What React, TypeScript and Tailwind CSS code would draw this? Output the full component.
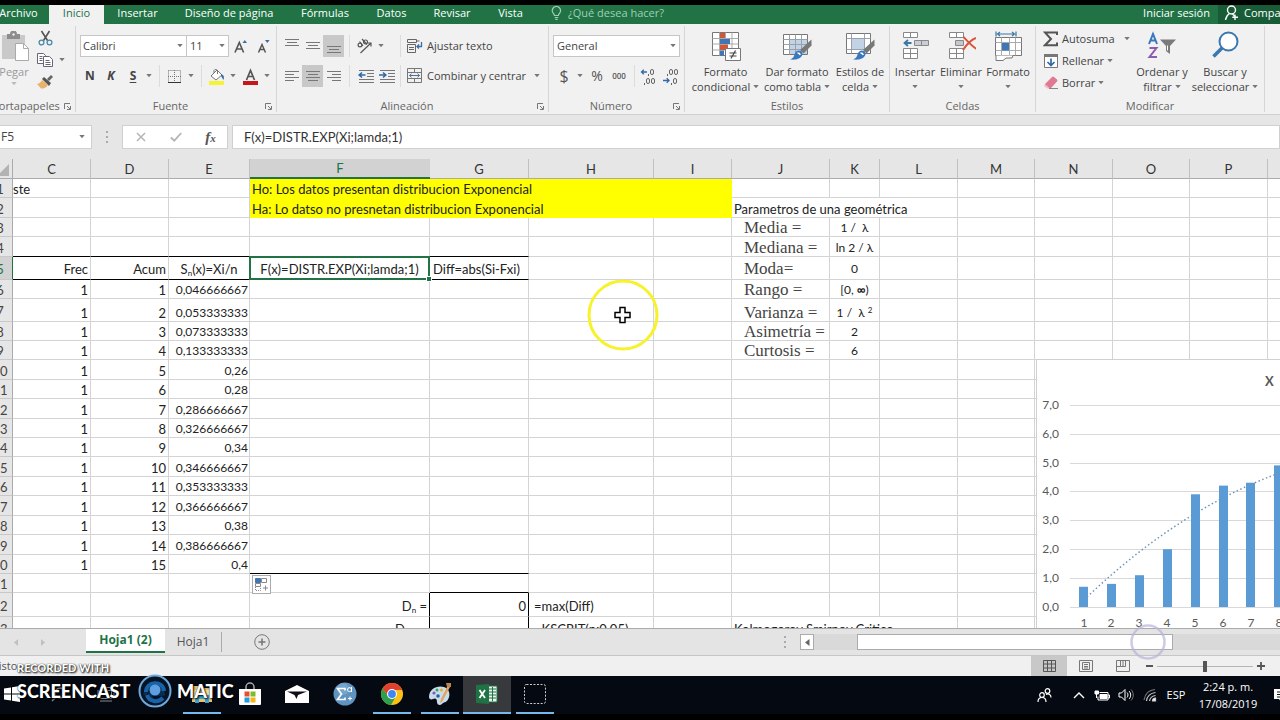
import React from "react";

type Kids = { children?: React.ReactNode };

const UI = "font-['Open_Sans','Noto_Sans',sans-serif]";
const CELL = "font-['Lato','Open_Sans',sans-serif]";

/* ---------- small shared pieces ---------- */

function Caret({ color = "#777" }: { color?: string }) {
  return (
    <svg width="6" height="4" viewBox="0 0 6 4" className="shrink-0" aria-hidden="true">
      <path d="M.3 0h5.400L3 3.300z" fill={color} />
    </svg>
  );
}

function IconBtn({ label, className = "w-[21px]", children }: Kids & { label: string; className?: string }) {
  return (
    <button aria-label={label} className={`flex h-[22px] shrink-0 items-center justify-center ${className}`}>
      {children}
    </button>
  );
}

function Sep({ className }: { className: string }) {
  return <span className={`h-[22px] w-px shrink-0 bg-[#dcdcdc] ${className}`} />;
}

function Group({ name, launcher, className, children }: Kids & { name: string; launcher?: boolean; className: string }) {
  return (
    <section aria-label={name} className={`flex shrink-0 flex-col border-r border-[#d6d6d6] ${className}`}>
      <div className="flex-1">{children}</div>
      <div className="flex h-3 items-center text-[#666]">
        <span className="flex-1 text-center leading-3 whitespace-nowrap">{name}</span>
        {launcher && (
          <button aria-label={`Configuración de ${name}`} className="flex w-[11px] shrink-0">
            <svg width="7" height="7" viewBox="0 0 7 7" fill="none" stroke="#777">
              <path d="M.5 6V.5H6M3 3l3 3M6.500 3v3.500H3" />
            </svg>
          </button>
        )}
      </div>
    </section>
  );
}

function BigBtn({ icon, lines, className, caretBelow }: { icon: React.ReactNode; lines: string[]; className: string; caretBelow?: boolean }) {
  return (
    <button className={`flex shrink-0 flex-col items-center gap-[3px] leading-[15px] whitespace-nowrap text-[#444] ${className}`}>
      <span className="flex h-[30px] items-center justify-center">{icon}</span>
      <span>
        <span className="block">{lines[0]}</span>
        <span className="flex h-[15px] items-center justify-center gap-[3px]">
          {!caretBelow && lines[1]}
          <Caret />
        </span>
      </span>
    </button>
  );
}

function Lines({ rows, y }: { rows: [number, number][]; y: number }) {
  return (
    <svg width="14" height="16" viewBox="0 0 14 16" stroke="#777" aria-hidden="true">
      {rows.map(([a, b], i) => (
        <path key={i} d={`M${a} ${y + i * 3 + 0.5}H${b}`} />
      ))}
    </svg>
  );
}

/* ---------- title tabs ---------- */

const TABS: [string, string][] = [
  ["Insertar", "w-[67px]"],
  ["Diseño de página", "w-[116px]"],
  ["Fórmulas", "w-[76px]"],
  ["Datos", "w-[57px]"],
  ["Revisar", "w-[64px]"],
  ["Vista", "w-[53px]"],
];

function TabStrip() {
  return (
    <nav className="flex h-[19px] shrink-0 items-start bg-[#217346] leading-4 whitespace-nowrap text-white">
      <button className="w-[61px] shrink-0">Archivo</button>
      <button className="h-[19px] w-[55px] shrink-0 bg-[#f1f1f1] pb-[3px] text-[#217346]">Inicio</button>
      {TABS.map(([t, w]) => (
        <button key={t} className={`shrink-0 ${w}`}>
          {t}
        </button>
      ))}
      <button className="ml-[14px] flex items-center gap-[6px] text-[#9fcfb3]">
        <svg width="11" height="14" viewBox="0 0 11 14" fill="none" stroke="#9fcfb3" strokeWidth="1.2">
          <path d="M3.500 9.500C3.500 8 1.200 7 1.200 4.700a4.200 4.200 0 0 1 8.400 0C9.600 7 7.300 8 7.300 9.500zM3.700 11.500h3.500M4.300 13.300h2.300" />
        </svg>
        ¿Qué desea hacer?
      </button>
      <button className="mr-2 ml-auto">Iniciar sesión</button>
      <button className="flex h-[19px] w-[62px] shrink-0 items-start gap-[5px] overflow-hidden bg-[#185c37] pl-[6px]">
        <svg width="15" height="16" viewBox="0 0 15 16" fill="none" stroke="#fff" strokeWidth="1.4" className="shrink-0">
          <circle cx="7.500" cy="5" r="4" />
          <path d="M5.500 8.500C3 10 2 12 1.500 15M8.500 9l2 2M11 9.500v5.500M8.300 12.300h5.700" />
        </svg>
        Compartir
      </button>
    </nav>
  );
}

/* ---------- ribbon ---------- */

function GridIcon({ kind }: { kind: "cond" | "table" | "style" }) {
  if (kind === "cond")
    return (
      <svg width="30" height="30" viewBox="0 0 30 30">
        <path d="M1.500 1.500h26v23h-26z" fill="#fff" stroke="#777" />
        <path d="M1.500 7.500h26M1.500 13h26M1.500 19h26M8.500 1.500v23M14.500 1.500v23M21 1.500v23" stroke="#aaa" fill="none" />
        <path d="M9 2h5v5H9zM9 13.500h8V19H9z" fill="#d0583a" />
        <path d="M9 8h10v5H9zM9 19.500h4v5H9z" fill="#3f76b5" />
        <path d="M14.500 17.500h15v12h-15z" fill="#fff" stroke="#777" />
        <path d="M18.500 22h7M18.500 25h7M24.500 19.500l-4.500 8" stroke="#444" fill="none" strokeWidth="1.200" />
      </svg>
    );
  return (
    <svg width="30" height="30" viewBox="0 0 30 30">
      <path d={kind === "table" ? "M1.500 3.500h24v20h-24z" : "M1.500 2.500h24v20h-24z"} fill="#fff" stroke="#777" />
      {kind === "table" ? (
        <>
          <path d="M8 9h17v14H8z" fill="#c3d3e6" />
          <path d="M1.500 8.500h24M1.500 13.500h24M1.500 18.500h24M7.500 3.500v20M13.500 3.500v20M19.500 3.500v20" stroke="#9ba1aa" fill="none" />
        </>
      ) : (
        <>
          <path d="M1.500 7.500h24M1.500 18.500h24M6.500 2.500v20M19.500 2.500v20" stroke="#9ba1aa" fill="none" />
          <path d="M7 8h12v10H7z" fill="#c3d3e6" />
        </>
      )}
      <path d="M29.500 8.500v6l-8 8-3.500-3.500z" fill="#777" />
      <path d="M17 19.500c2.500.5 3.500 2 3.500 4-2 5-7 5.500-12.500 5 3-1 4-3 4.500-5 .8-2.500 2.500-4 4.500-4z" fill="#3a78bd" />
      <path d="M15.500 22c1.500 0 2.500.8 2.800 2" stroke="#fff" fill="none" strokeWidth="1.300" />
    </svg>
  );
}

function CellsIcon({ kind }: { kind: "ins" | "del" }) {
  return (
    <svg width="30" height="30" viewBox="0 0 30 30" fill="none">
      <path d="M3.500 1.500h14v5h-14zM10.500 1.500v5M3.500 17.500h14v10h-14zM3.500 22.500h14M10.500 17.500v10" fill="#fff" stroke="#888" />
      {kind === "ins" ? (
        <>
          <path d="M14.500 9.500h14v5h-14zM21.500 9.500v5" fill="#c9ced6" stroke="#888" />
          <path d="M11.500 12H5M8 9l-3.500 3L8 15" stroke="#3a78a8" strokeWidth="1.800" />
        </>
      ) : (
        <>
          <path d="M9.500 9.500h8v5h-8z" fill="#c3c8cf" stroke="#888" />
          <path d="M17.500 6c3 3 8 9 13 12M30 7c-5 2-9 6-13 12" stroke="#d8553a" strokeWidth="2" />
        </>
      )}
    </svg>
  );
}

function DecimalIcon({ more }: { more?: boolean }) {
  return (
    <svg width="18" height="17" viewBox="0 0 18 17" fill="none" stroke="#666">
      <rect x={more ? 11.5 : 12.500} y={more ? 1.5 : 10.500} width="3" height="5" rx="1.500" />
      <rect x={more ? 7.5 : 8.500} y={more ? 10.500 : 1.500} width="3" height="5" rx="1.500" />
      <rect x={more ? 12.500 : 13.500} y={more ? 10.500 : 1.500} width="3" height="5" rx="1.500" />
      <path d={more ? "M9.500 6v2M5.500 15v2" : "M6.500 6v2M10.500 15v2"} />
      <path d={more ? "M8 4H2.500M4.800 1.800L2.500 4l2.300 2.200" : "M2 12.500h6M5.700 10.300L8 12.500l-2.300 2.200"} stroke="#2f6aa8" strokeWidth="1.300" />
    </svg>
  );
}

function Ribbon() {
  return (
    <div className="flex h-[90px] shrink-0 overflow-hidden bg-[#f1f1f1] py-0.5">
      <Group name="Portapapeles" launcher className="w-[88px]">
        <div className="flex pl-2">
          <button className="flex w-9 flex-col items-center gap-[3px] pt-[5px] leading-[15px] text-[#999]">
            <svg width="30" height="30" viewBox="0 0 30 30">
              <path d="M3 4h23v24H3z" fill="#c9c9c9" />
              <path d="M8 3h3a3.500 3.500 0 0 1 7 0h3v5H8z" fill="#8d8d8d" />
              <circle cx="14.500" cy="3.500" r="1.200" fill="#eee" />
              <path d="M16.500 12.500h8l5 5v12h-13z" fill="#fff" stroke="#aaa" />
              <path d="M24.500 12.500v5h5" fill="none" stroke="#aaa" />
            </svg>
            <span>Pegar</span>
            <Caret color="#bbb" />
          </button>
          <div className="flex w-[38px] flex-col pt-px">
            <IconBtn label="Cortar" className="w-[26px]">
              <svg width="15" height="16" viewBox="0 0 15 16" fill="none">
                <path d="M3.500 1l6 9.500M11.500 1l-6 9.500" stroke="#555" strokeWidth="1.600" />
                <circle cx="3.500" cy="12.500" r="2.400" stroke="#4789a8" strokeWidth="1.300" />
                <circle cx="11.500" cy="12.500" r="2.400" stroke="#4789a8" strokeWidth="1.300" />
              </svg>
            </IconBtn>
            <IconBtn label="Copiar" className="w-[38px] gap-[6px]">
              <svg width="16" height="14" viewBox="0 0 16 14" fill="#fff" stroke="#667">
                <path d="M.5.500h6l2 2v8h-8zM2.500 3.500h3M2.500 5.500h3M2.500 7.500h3" />
                <path d="M6.500 3.500h6l3 3v7h-9zM8.500 7.500h4M8.500 9.500h5M8.500 11.500h5" />
              </svg>
              <Caret />
            </IconBtn>
            <IconBtn label="Copiar formato" className="w-[26px]">
              <svg width="16" height="14" viewBox="0 0 16 14">
                <path d="M10 4l4-4 2 2-4 4z" fill="#666" />
                <path d="M5 4l2-2 7 6-2 3z" fill="#555" />
                <path d="M5 5l6 5c-2 3-5 4-7 3.500L0 9c2-.5 4-1.500 5-4z" fill="#e8b36d" />
              </svg>
            </IconBtn>
          </div>
        </div>
      </Group>

      <Group name="Fuente" launcher className="w-[201px]">
        <div className="flex flex-col gap-2 pt-[9px] pl-1">
          <div className="flex items-center">
            <label className="relative flex items-center">
              <select aria-label="Fuente" className="h-[22px] w-[107px] appearance-none border border-[#c6c6c6] bg-white pl-[2px] text-[#444]">
                <option>Calibri</option>
              </select>
              <span className="pointer-events-none absolute right-1"><Caret /></span>
            </label>
            <label className="relative flex items-center">
              <select aria-label="Tamaño de fuente" className="h-[22px] w-[42px] appearance-none border border-l-0 border-[#c6c6c6] bg-white pl-[3px] text-[#444]">
                <option>11</option>
              </select>
              <span className="pointer-events-none absolute right-1"><Caret /></span>
            </label>
            <IconBtn label="Aumentar tamaño" className="w-6">
              <svg width="14" height="15" viewBox="0 0 14 15" fill="none">
                <path d="M1 13.500L5.300 3.500 9.600 13.500M2.500 10h5.600" stroke="#555" strokeWidth="1.600" />
                <path d="M8.500 4l2.300-3L13 4z" fill="#3a6ea5" />
              </svg>
            </IconBtn>
            <IconBtn label="Disminuir tamaño" className="w-[22px]">
              <svg width="14" height="15" viewBox="0 0 14 15" fill="none">
                <path d="M1.500 13.500l3.500-8 3.500 8M3 10.500h4.200" stroke="#555" strokeWidth="1.500" />
                <path d="M8 1h4.600l-2.300 3z" fill="#3a6ea5" />
              </svg>
            </IconBtn>
          </div>
          <div className="flex items-center text-xs text-[#444]">
            <IconBtn label="Negrita" className="w-5"><b>N</b></IconBtn>
            <IconBtn label="Cursiva" className="w-[22px]"><b className="italic">K</b></IconBtn>
            <IconBtn label="Subrayado" className="w-[22px]"><b className="underline underline-offset-2">S</b></IconBtn>
            <IconBtn label="Opciones de subrayado" className="w-[10px]"><Caret /></IconBtn>
            <Sep className="mr-1 ml-[5px]" />
            <IconBtn label="Bordes" className="w-5">
              <svg width="13" height="13" viewBox="0 0 13 13" fill="none" stroke="#777">
                <path d="M.5.500h12v12M.5.500v12M6.500 0v12M0 6.500h13" strokeDasharray="1 1" />
                <path d="M0 12.500h13" stroke="#333" />
              </svg>
            </IconBtn>
            <IconBtn label="Opciones de bordes" className="w-[14px]"><Caret /></IconBtn>
            <Sep className="mr-1 ml-[3px]" />
            <IconBtn label="Color de relleno" className="w-[22px]">
              <svg width="16" height="17" viewBox="0 0 16 17">
                <path d="M2 8l6-6 5 5-6 5z" fill="#fff" stroke="#777" />
                <path d="M5 5V2.500a2 2 0 0 1 3.500 0V6" fill="none" stroke="#777" />
                <path d="M12 6c3 1 3.500 3 2.500 6-1-1-1.500-3-2.500-4z" fill="#3a6ea5" />
                <path d="M0 13h15v4H0z" fill="#f4f432" />
              </svg>
            </IconBtn>
            <IconBtn label="Opciones de relleno" className="w-[10px]"><Caret /></IconBtn>
            <IconBtn label="Color de fuente" className="w-6">
              <svg width="15" height="17" viewBox="0 0 15 17" fill="none">
                <path d="M3.500 12L7.500 2.500l4 9.500M5 8.500h5" stroke="#555" strokeWidth="1.700" />
                <path d="M0 13h15v4H0z" fill="#c8161d" />
              </svg>
            </IconBtn>
            <IconBtn label="Opciones de color" className="w-[10px]"><Caret /></IconBtn>
          </div>
        </div>
      </Group>

      <Group name="Alineación" launcher className="w-[272px]">
        <div className="flex flex-col gap-2 pt-[9px] pl-1">
          <div className="flex items-center">
            <IconBtn label="Alinear arriba"><Lines y={1} rows={[[0, 14], [2, 12], [0, 14]]} /></IconBtn>
            <IconBtn label="Alinear al medio"><Lines y={4} rows={[[0, 14], [2, 12], [0, 14]]} /></IconBtn>
            <IconBtn label="Alinear abajo" className="w-[21px] bg-[#c8c8c8]"><Lines y={8} rows={[[0, 14], [2, 12], [0, 14]]} /></IconBtn>
            <Sep className="mx-[5px]" />
            <IconBtn label="Orientación" className="w-[30px] gap-1">
              <svg width="18" height="16" viewBox="0 0 18 16" fill="none" stroke="#555" strokeWidth="1.200">
                <circle cx="4" cy="7" r="1.900" />
                <path d="M3.500 3.500l3.500 4.500M6 1l5 5.500" />
                <circle cx="9.500" cy="4" r="2" />
                <path d="M4.500 15L15 5M11.500 5H15v3.500" />
              </svg>
              <Caret />
            </IconBtn>
            <Sep className="mr-[5px] ml-[15px]" />
            <button className="flex h-[22px] items-center gap-[4px] whitespace-nowrap text-[#444]">
              <svg width="17" height="16" viewBox="0 0 17 16" fill="none" stroke="#666">
                <path d="M1.500 1.500h9v3h-9zM1.500 6.500h8v8h-8zM3 9.500h5M3 11.500h5M10.500 3h3" />
                <path d="M15.500 4v4.500H11M13 6.500l-2 2 2 2" stroke="#3a6ea5" strokeWidth="1.300" />
              </svg>
              Ajustar texto
            </button>
          </div>
          <div className="flex items-center">
            <IconBtn label="Alinear a la izquierda"><Lines y={3} rows={[[0, 14], [0, 9], [0, 14], [0, 9]]} /></IconBtn>
            <IconBtn label="Centrar" className="w-[21px] bg-[#c8c8c8]"><Lines y={3} rows={[[0, 14], [2, 12], [0, 14], [2, 12]]} /></IconBtn>
            <IconBtn label="Alinear a la derecha"><Lines y={3} rows={[[0, 14], [5, 14], [0, 14], [5, 14]]} /></IconBtn>
            <Sep className="mx-[5px]" />
            <IconBtn label="Disminuir sangría">
              <svg width="16" height="14" viewBox="0 0 16 14" fill="none" stroke="#777">
                <path d="M1 1.500h15M9 4.500h7M9 7.500h7M1 10.500h15M1 13.500h15" />
                <path d="M7.500 6H1M4 3.500L1.200 6 4 8.500" stroke="#2f6aa8" strokeWidth="1.600" />
              </svg>
            </IconBtn>
            <IconBtn label="Aumentar sangría">
              <svg width="16" height="14" viewBox="0 0 16 14" fill="none" stroke="#777">
                <path d="M1 1.500h15M9 4.500h7M9 7.500h7M1 10.500h15M1 13.500h15" />
                <path d="M0 6h7M4 3.500L6.800 6 4 8.500" stroke="#2f6aa8" strokeWidth="1.600" />
              </svg>
            </IconBtn>
            <Sep className="mr-[5px] ml-[3px]" />
            <button className="flex h-[22px] items-center gap-[4px] whitespace-nowrap text-[#444]">
              <svg width="17" height="16" viewBox="0 0 17 16" fill="none" stroke="#777">
                <path d="M1.500.500h14v14h-14zM1.500 4.500h14M1.500 10.500h14M8.500.500v4M8.500 10.500v4" />
                <path d="M3.500 7.500h10M5.500 5.700l-2 1.800 2 1.800M11.500 5.700l2 1.800-2 1.800" stroke="#4a7396" />
              </svg>
              Combinar y centrar
            </button>
            <IconBtn label="Opciones de combinar" className="w-[22px]"><Caret /></IconBtn>
          </div>
        </div>
      </Group>

      <Group name="Número" launcher className="w-[136px]">
        <div className="flex flex-col gap-2 px-1 pt-[9px]">
          <label className="relative flex items-center">
            <select aria-label="Formato de número" className="h-[22px] w-full appearance-none border border-[#c6c6c6] bg-white pl-[3px] text-[#444]">
              <option>General</option>
            </select>
            <span className="pointer-events-none absolute right-1"><Caret /></span>
          </label>
          <div className="flex items-center text-[#555]">
            <IconBtn label="Moneda" className="w-[22px] text-base">$</IconBtn>
            <IconBtn label="Opciones de moneda" className="w-[10px]"><Caret /></IconBtn>
            <IconBtn label="Porcentaje" className="w-6 text-sm">%</IconBtn>
            <IconBtn label="Millares" className="w-5 text-[8px] font-semibold">000</IconBtn>
            <Sep className="mr-[2px] ml-[5px]" />
            <IconBtn label="Aumentar decimales" className="w-[22px]"><DecimalIcon more /></IconBtn>
            <IconBtn label="Disminuir decimales" className="w-[22px]"><DecimalIcon /></IconBtn>
          </div>
        </div>
      </Group>

      <Group name="Estilos" className="w-[205px]">
        <div className="flex pt-[5px] pl-1">
          <BigBtn className="w-[73px]" icon={<GridIcon kind="cond" />} lines={["Formato", "condicional"]} />
          <BigBtn className="w-[70px]" icon={<GridIcon kind="table" />} lines={["Dar formato", "como tabla"]} />
          <BigBtn className="w-[56px]" icon={<GridIcon kind="style" />} lines={["Estilos de", "celda"]} />
        </div>
      </Group>

      <Group name="Celdas" className="w-[146px]">
        <div className="flex pt-[5px] pl-0.5">
          <BigBtn className="w-[46px]" caretBelow icon={<CellsIcon kind="ins" />} lines={["Insertar"]} />
          <BigBtn className="w-[46px]" caretBelow icon={<CellsIcon kind="del" />} lines={["Eliminar"]} />
          <BigBtn
            className="w-[48px]"
            caretBelow
            lines={["Formato"]}
            icon={
              <svg width="30" height="30" viewBox="0 0 30 30" fill="none">
                <path d="M2.500 6.500h26v18h-26z" fill="#fff" stroke="#777" />
                <path d="M2.500 11.500h26M2.500 19.500h26M8.500 6.500v18M16.500 6.500v18M22.500 6.500v18" stroke="#aaa" />
                <path d="M9 12h7v7.500H9z" fill="#3f76b5" />
                <path d="M3 24.500v5h7l3-2.500h6l1-2.500" stroke="#777" fill="#fff" />
                <path d="M3 .500v5M23 .500v5M4.500 3h17M7 1L4.500 3 7 5M19 1l2.500 2L19 5" stroke="#3a78a8" strokeWidth="1.200" />
              </svg>
            }
          />
        </div>
      </Group>

      <Group name="Modificar" className="w-[229px]">
        <div className="flex pl-1">
          <div className="flex w-[95px] flex-col pt-0.5 text-[#444]">
            <button className="flex h-[22px] items-center pl-[3px]">
              <span className="w-[19px]">
                <svg width="16" height="16" viewBox="0 0 16 16" fill="none" stroke="#555" strokeWidth="2">
                  <path d="M14 4V1.500H2L8 8l-6 6.200h12V11.500" />
                </svg>
              </span>
              <span className="w-[62px] text-left">Autosuma</span>
              <Caret />
            </button>
            <button className="flex h-[22px] items-center pl-[3px]">
              <span className="w-[19px]">
                <svg width="16" height="16" viewBox="0 0 16 16" fill="none">
                  <path d="M1.500 1.500h13v13h-13z" fill="#fff" stroke="#777" />
                  <path d="M1 1h14v3H1z" fill="#777" />
                  <path d="M8 5.500V12M4.500 9L8 12.500 11.500 9" stroke="#2f6aa8" strokeWidth="1.700" />
                </svg>
              </span>
              <span className="mr-[3px]">Rellenar</span>
              <Caret />
            </button>
            <button className="flex h-[22px] items-center pl-[3px]">
              <span className="w-[19px]">
                <svg width="16" height="14" viewBox="0 0 16 14">
                  <path d="M2 8l7-7q1-1 2 0l3 2.500q1 1 0 2L8 12H5L2 10z" fill="#e07a94" />
                  <path d="M2 8l5 4.500H4.500L1 10z" fill="#f4b9c6" />
                  <path d="M6 12.500h9" stroke="#888" />
                </svg>
              </span>
              <span className="mr-[3px]">Borrar</span>
              <Caret />
            </button>
          </div>
          <div className="flex pt-[5px]">
            <BigBtn
              className="w-[54px]"
              lines={["Ordenar y", "filtrar"]}
              icon={
                <svg width="30" height="30" viewBox="0 0 30 30" fill="none">
                  <path d="M2 13L6 3l4 10M3.500 9.500h5" stroke="#3a78bd" strokeWidth="2" />
                  <path d="M2.500 17h7L2.500 26h7.500" stroke="#8d5bb0" strokeWidth="2" />
                  <path d="M13 8.500h16l-6 6.500v8l-4-3v-5z" fill="#7a7a7a" />
                  <path d="M20.500 14.500v5" stroke="#fff" />
                </svg>
              }
            />
            <BigBtn
              className="w-[72px]"
              lines={["Buscar y", "seleccionar"]}
              icon={
                <svg width="30" height="30" viewBox="0 0 30 30" fill="none">
                  <circle cx="18.500" cy="10.500" r="9" fill="#fff" stroke="#3a78b0" strokeWidth="2" />
                  <path d="M12 17L3.500 25.500" stroke="#3a78b0" strokeWidth="3.500" />
                </svg>
              }
            />
          </div>
        </div>
      </Group>
    </div>
  );
}

/* ---------- formula bar ---------- */

function FormulaBar() {
  return (
    <div className="flex h-[45px] shrink-0 items-start border-t border-[#d0d0d0] bg-[#e6e6e6] pt-[10px]">
      <label className="flex h-6 w-[104px] shrink-0 items-center border border-[#d0d0d0] bg-white pr-[6px] pl-3">
        <input aria-label="Cuadro de nombres" defaultValue="F5" className="w-full min-w-0 text-xs text-[#444] outline-none" />
        <Caret />
      </label>
      <span className="flex h-6 w-[30px] shrink-0 flex-col items-center justify-center gap-[3px]">
        <i className="size-[2px] bg-[#aaa]" />
        <i className="size-[2px] bg-[#aaa]" />
        <i className="size-[2px] bg-[#aaa]" />
      </span>
      <div className="flex h-6 w-[106px] shrink-0 border border-[#d0d0d0] bg-white">
        <IconBtn label="Cancelar" className="w-[35px]">
          <svg width="10" height="10" viewBox="0 0 10 10" stroke="#b5b5b5" strokeWidth="1.500"><path d="M1 1l8 8M9 1L1 9" /></svg>
        </IconBtn>
        <IconBtn label="Introducir" className="w-[35px]">
          <svg width="12" height="10" viewBox="0 0 12 10" fill="none" stroke="#b5b5b5" strokeWidth="1.800"><path d="M.8 5.500l3.500 3.200L11.200 1" /></svg>
        </IconBtn>
        <IconBtn label="Insertar función" className="w-[35px]">
          <i className="font-['Liberation_Serif',serif] text-[15px] font-bold text-[#555]">f<span className="text-[11px]">x</span></i>
        </IconBtn>
      </div>
      <input
        aria-label="Barra de fórmulas"
        defaultValue="F(x)=DISTR.EXP(Xi;lamda;1)"
        className={`ml-1 h-6 min-w-0 flex-1 border border-[#d0d0d0] bg-white pl-[11px] text-[13px] text-[#333] outline-none ${CELL}`}
      />
    </div>
  );
}

/* ---------- sheet ---------- */

const COLS: [string, string][] = [
  ["C", "w-[78px]"],
  ["D", "w-[78px]"],
  ["E", "w-[81px]"],
  ["F", "w-[180px]"],
  ["G", "w-[99px]"],
  ["H", "w-[125px]"],
  ["I", "w-[78px]"],
  ["J", "w-[98px]"],
  ["K", "w-[50px]"],
  ["L", "w-[78px]"],
  ["M", "w-[77px]"],
  ["N", "w-[78px]"],
  ["O", "w-[77px]"],
  ["P", "w-[78px]"],
  ["Q", "w-[78px]"],
];

const ROW_H = [
  "h-[19px]", "h-[20px]", "h-[19px]", "h-[20px]", "h-[23px]", "h-[19px]", "h-[23px]", "h-[19px]",
  "h-[19px]", "h-[20px]", "h-[19px]", "h-[20px]", "h-[19px]", "h-[19px]", "h-[20px]", "h-[19px]",
  "h-[20px]", "h-[19px]", "h-[20px]", "h-[19px]", "h-[19px]", "h-[24px]", "h-[23px]",
];

type Cell = { v: React.ReactNode; c?: string; span?: number };
const Sub = ({ children }: Kids) => <sub className="text-[8px] leading-none">{children}</sub>;
const R = "text-right pr-0.5";
const P = "text-center text-[12px]";
const S = "pl-3 text-[17px] text-[#444] font-['Liberation_Serif',serif]";
const YEL = "bg-[#ffff00] border-[#ffff00] pl-0.5";

const SN = [
  "0,046666667", "0,053333333", "0,073333333", "0,133333333", "0,26", "0,28", "0,286666667", "0,326666667",
  "0,34", "0,346666667", "0,353333333", "0,366666667", "0,38", "0,386666667", "0,4",
];

const CELLS: Record<string, Cell> = {
  C1: { v: "ste" },
  F1: { v: "Ho: Los datos presentan distribucion Exponencial", c: YEL, span: 4 },
  F2: { v: "Ha: Lo datso no presnetan distribucion Exponencial", c: YEL, span: 4 },
  J2: { v: "Parametros de una geométrica", c: "pl-0.5", span: 3 },
  C5: { v: "Frec", c: R },
  D5: { v: "Acum", c: R },
  E5: { v: <>S<Sub>n</Sub>(x)=Xi/n</>, c: "text-center" },
  F5: { v: "F(x)=DISTR.EXP(Xi;lamda;1)", c: "text-center" },
  G5: { v: "Diff=abs(Si-Fxi)", c: "pl-[3px]" },
  J3: { v: "Media =", c: S },
  J4: { v: "Mediana =", c: S },
  J5: { v: "Moda=", c: S },
  J6: { v: "Rango =", c: S },
  J7: { v: "Varianza =", c: S },
  J8: { v: "Asimetría =", c: S },
  J9: { v: "Curtosis =", c: S },
  K3: { v: "1 /\u00a0 λ", c: P },
  K4: { v: "ln 2 / λ", c: P },
  K5: { v: "0", c: P },
  K6: { v: <>[0, <b>∞</b>)</>, c: P },
  K7: { v: <>1 /{"\u00a0"} λ <sup className="text-[8px] leading-none">2</sup></>, c: P },
  K8: { v: "2", c: P },
  K9: { v: "6", c: P },
  F22: { v: <>D<Sub>n</Sub> =</>, c: R },
  G22: { v: "0", c: R },
  H22: { v: "=max(Diff)", c: "pl-[5px]" },
  F23: { v: <>D<Sub>n;α</Sub> =</>, c: R },
  H23: { v: "=KSCRIT(n;0,05)", c: "pl-[5px]" },
  J23: { v: "Kolmogorov Smirnov Critico", c: "pl-0.5", span: 3 },
};
SN.forEach((v, i) => {
  CELLS[`C${i + 6}`] = { v: "1", c: R };
  CELLS[`D${i + 6}`] = { v: String(i + 1), c: R };
  CELLS[`E${i + 6}`] = { v, c: "text-right pr-px text-[12px]" };
});

function edge(col: string, row: number) {
  let s = "";
  if ("CDEFG".includes(col) && (row === 4 || row === 5)) s += " border-b-black";
  if ((col === "F" || col === "G") && row === 20) s += " border-b-black";
  if (col === "G" && row === 21) s += " border-b-black";
  if ((col === "F" || col === "G") && row >= 22) s += " border-r-black";
  return s;
}

function SheetRow({ row }: { row: number }) {
  const tds: React.ReactNode[] = [];
  for (let i = 0; i < COLS.length; i++) {
    const col = COLS[i][0];
    const key = `${col}${row}`;
    const cell = CELLS[key];
    const anchored = key === "F5" || key === "F21";
    tds.push(
      <td
        key={key}
        colSpan={cell?.span}
        className={`border-r border-b border-[#d4d4d4] px-0 pt-0.5 pb-0 ${anchored ? "relative" : ""} ${row === 7 ? "align-bottom" : ""} ${cell?.c ?? ""}${edge(col, row)}`}
      >
        {cell?.v}
        {key === "F5" && (
          <>
            <span className="absolute -inset-px border-2 border-[#217346]" />
            <span className="absolute -right-[3px] -bottom-[3px] size-[6px] border border-white bg-[#217346]" />
          </>
        )}
        {key === "F21" && (
          <button aria-label="Opciones de autorrelleno" className="absolute top-px left-0.5 border border-[#ababab] bg-white p-px">
            <svg width="15" height="15" viewBox="0 0 15 15" fill="none" stroke="#888">
              <path d="M1.500 1.500h5v4h-5z" fill="#3f76b5" stroke="#3f76b5" />
              <path d="M7.500 1.500h5v4h-5zM1.500 6.500h5v3h-5zM11.500 8.500v5M9 11h5" />
              <path d="M1.500 10v3.500h5V10" strokeDasharray="1 1" />
            </svg>
          </button>
        )}
      </td>
    );
    if (cell?.span) i += cell.span - 1;
  }
  const sel = row === 5;
  return (
    <tr className={ROW_H[row - 1]}>
      <th
        scope="row"
        className={`border-r border-b border-b-[#c8c8c8] px-0 pt-0.5 pb-0 font-normal ${sel ? "border-r-[#217346] bg-[#d2d2d2] text-[#217346]" : "border-r-[#ababab] bg-[#e6e6e6] text-[#444]"}`}
      >
        {row}
      </th>
      {tds}
    </tr>
  );
}

const BARS = [0.7, 0.8, 1.1, 2, 3.9, 4.2, 4.3, 4.9];

function Chart() {
  const y = (v: number) => 247 - v * 28.9;
  return (
    <figure className="absolute top-[200px] left-[1048px] border border-[#d0d0d0] bg-white">
      <svg width="260" height="280" viewBox="0 0 260 280" fontSize="12" fill="#595959" className={CELL}>
        <text x="228" y="26" fontSize="13" fontWeight="700">X</text>
        {[0, 1, 2, 3, 4, 5, 6, 7].map((v) => (
          <g key={v}>
            <path d={`M33 ${Math.round(y(v)) + 0.5}H260`} stroke="#d9d9d9" />
            <text x="22" y={Math.round(y(v)) + 4} textAnchor="end">{v},0</text>
          </g>
        ))}
        <path d="M50 237Q150 142 260 107" fill="none" stroke="#6f93b8" strokeWidth="1.500" strokeDasharray="1.500 2.500" />
        {BARS.map((v, i) => (
          <g key={i}>
            <rect x={Math.round(42 + i * 27.9)} y={y(v)} width="9" height={247 - y(v)} fill="#5b9bd5" />
            <text x={Math.round(46.5 + i * 27.9)} y="267" textAnchor="middle">{i + 1}</text>
          </g>
        ))}
      </svg>
    </figure>
  );
}

function Sheet() {
  return (
    <main className={`relative min-h-0 flex-1 overflow-hidden bg-white text-[13px] leading-4 text-[#222] ${CELL}`}>
      <table className="w-[1358px] table-fixed border-separate border-spacing-0 whitespace-nowrap">
        <thead>
          <tr className="h-5 bg-[#e6e6e6] text-[#333]">
            <th scope="col" aria-label="Seleccionar todo" className="w-[25px] border-r border-b border-[#ababab] p-0">
              <svg width="24" height="16" viewBox="0 0 24 16" className="block"><path d="M21 3v12H9z" fill="#b3b3b3" /></svg>
            </th>
            {COLS.map(([c, w]) => (
              <th
                key={c}
                scope="col"
                className={`${w} p-0 font-normal ${c === "F" ? "border-b-2 border-[#217346] bg-[#d2d2d2] text-[#217346]" : "border-r border-b border-r-[#c0c0c0] border-b-[#ababab]"}`}
              >
                {c}
              </th>
            ))}
          </tr>
        </thead>
        <tbody>
          {ROW_H.map((_, i) => (
            <SheetRow key={i} row={i + 1} />
          ))}
        </tbody>
      </table>
      <Chart />
      <svg width="72" height="72" viewBox="0 0 72 72" fill="none" className="absolute top-[120px] left-[599px]" aria-hidden="true">
        <circle cx="36" cy="36" r="34" stroke="#f6f22c" strokeWidth="3" />
        <path d="M33 28.500h5v5h5v5h-5v5h-5v-5h-5v-5h5z" fill="#fff" stroke="#000" strokeWidth="1.500" />
      </svg>
    </main>
  );
}

/* ---------- sheet tabs and status bar ---------- */

function SheetTabs() {
  return (
    <div className="relative flex h-[28px] shrink-0 border-t border-b border-t-[#ababab] border-b-[#c6c6c6] bg-[#e4e4e4]">
      <div className="flex w-[98px] shrink-0 items-center gap-[22px] pl-[26px]">
        <svg width="5" height="7" viewBox="0 0 5 7"><path d="M4 0v7L0 3.500z" fill="#c0c0c0" /></svg>
        <svg width="5" height="7" viewBox="0 0 5 7"><path d="M0 0v7l4-3.500z" fill="#c0c0c0" /></svg>
      </div>
      <button className="h-6 w-[79px] shrink-0 border-b-2 border-[#217346] bg-white text-xs font-bold whitespace-nowrap text-[#217346]">Hoja1 (2)</button>
      <button className="my-[3px] w-[57px] shrink-0 border-r border-[#ababab] text-xs text-[#555]">Hoja1</button>
      <button aria-label="Hoja nueva" className="ml-8 shrink-0">
        <svg width="16" height="16" viewBox="0 0 16 16" fill="none" stroke="#777"><circle cx="8" cy="8" r="7.300" /><path d="M8 4.500v7M4.500 8h7" strokeWidth="1.600" /></svg>
      </button>
      <span className="ml-[513px] flex w-[3px] flex-col items-center justify-center gap-[3px]">
        <i className="size-[2px] bg-[#aaa]" />
        <i className="size-[2px] bg-[#aaa]" />
        <i className="size-[2px] bg-[#aaa]" />
      </span>
      <div className="my-[5px] ml-[14px] flex min-w-0 flex-1 bg-[#d9d9d9]">
        <button aria-label="Desplazar a la izquierda" className="flex w-[14px] shrink-0 items-center justify-center border border-[#ababab] bg-white">
          <svg width="5" height="7" viewBox="0 0 5 7"><path d="M4.500 0v7L0 3.500z" fill="#666" /></svg>
        </button>
        <span className="ml-[43px] w-[316px] border border-[#ababab] bg-white" />
      </div>
      <svg width="38" height="38" viewBox="0 0 38 38" fill="none" className="absolute -top-[6px] left-[1141px]" aria-hidden="true">
        <circle cx="19" cy="19" r="16.500" stroke="#b9b3d8" strokeOpacity=".7" strokeWidth="2.500" />
      </svg>
    </div>
  );
}

function StatusBar() {
  return (
    <footer className="flex h-5 shrink-0 items-center bg-[#f0f0f0] text-[#555]">
      <span className="pl-[5px]">Listo</span>
      <div className="mr-3 ml-auto flex items-center">
        <button aria-label="Normal" className="flex h-5 w-9 items-center justify-center bg-[#c8c8c8]">
          <svg width="13" height="12" viewBox="0 0 13 12" fill="none" stroke="#555"><path d="M.5.500h12v11H.5zM.5 4h12M.5 8h12M4.500.500v11M8.500.500v11" /></svg>
        </button>
        <button aria-label="Diseño de página" className="flex w-[38px] justify-center">
          <svg width="14" height="12" viewBox="0 0 14 12" fill="none" stroke="#777"><path d="M.5.500h13v11H.5zM3.500 2.500h7v7h-7zM5 4.500h4M5 6.500h4M5 8h4" /></svg>
        </button>
        <button aria-label="Vista previa de salto de página" className="flex w-9 justify-center">
          <svg width="14" height="12" viewBox="0 0 14 12" fill="none" stroke="#777"><path d="M.5.500h13v11H.5zM4.500.500v6h5v-6M.5 6.500h4M7 .500v6" /></svg>
        </button>
        <button aria-label="Alejar" className="ml-[5px] flex h-5 w-[7px] items-center"><span className="h-[2px] w-[7px] bg-[#555]" /></button>
        <input
          type="range"
          aria-label="Zoom"
          defaultValue={50}
          className="mx-1 h-[11px] w-[96px] appearance-none bg-[linear-gradient(#b5b5b5,#b5b5b5)] bg-[length:100%_1px] bg-center bg-no-repeat [&::-webkit-slider-thumb]:h-[11px] [&::-webkit-slider-thumb]:w-1 [&::-webkit-slider-thumb]:appearance-none [&::-webkit-slider-thumb]:bg-[#555]"
        />
        <button aria-label="Acercar">
          <svg width="8" height="8" viewBox="0 0 8 8" stroke="#555" strokeWidth="1.800"><path d="M4 0v8M0 4h8" /></svg>
        </button>
        <span className="w-[3px]" />
      </div>
    </footer>
  );
}

/* ---------- taskbar ---------- */

function Task({ label, className = "w-12", open, active, children }: Kids & { label: string; className?: string; open?: boolean; active?: boolean }) {
  return (
    <button aria-label={label} className={`flex h-full shrink-0 flex-col items-center ${active ? "bg-[#38393c]" : ""} ${className}`}>
      <span className="flex flex-1 items-center">{children}</span>
      <span className={`h-0.5 ${active ? "w-full" : "w-[38px]"} ${open || active ? "bg-[#76b9ed]" : ""}`} />
    </button>
  );
}

function Taskbar() {
  return (
    <div className="flex h-[38px] shrink-0 bg-[#050a12] text-white">
      <Task label="Inicio">
        <svg width="18" height="18" viewBox="0 0 18 18" fill="#fff"><path d="M1 3.500l7-1v6H1zM9 2.300L17 1v7.500H9zM1 9.500h7v6l-7-1zM9 9.500h8V17l-8-1.300z" /></svg>
      </Task>
      <Task label="Buscar" className="w-[46px]">
        <svg width="18" height="18" viewBox="0 0 18 18" fill="none" stroke="#888" strokeWidth="1.500"><circle cx="10" cy="8" r="5" /><path d="M6 12l-4 4" /></svg>
      </Task>
      <Task label="Vista de tareas">
        <svg width="18" height="16" viewBox="0 0 18 16" fill="none" stroke="#888"><path d="M3.500 4.500h11v8h-11zM1 4v9M17 4v9M3 1.500h12M3 15h12" /></svg>
      </Task>
      <Task label="Edge">
        <svg width="24" height="24" viewBox="0 0 24 24" fill="none"><path d="M3 13C4 3 20 2 21 12H8c0 8 8 8 12 5" stroke="#1670c4" strokeWidth="3.500" /></svg>
      </Task>
      <Task label="Explorador de archivos" open>
        <svg width="22" height="20" viewBox="0 0 22 20"><path d="M1 2h7l2 2h11v14H1z" fill="#e9c46a" /><path d="M3 6h16v6H3z" fill="#f8e3a0" /><path d="M4 11h14v8h-4v-4H8v4H4z" fill="#3ba3d8" /></svg>
      </Task>
      <Task label="Tienda" className="w-[47px]">
        <svg width="24" height="24" viewBox="0 0 24 24"><path d="M8 8V5a4 4 0 0 1 8 0v3" fill="none" stroke="#aaa" strokeWidth="1.500" /><path d="M1 7h22v15q0 1-1 1H2q-1 0-1-1z" fill="#fff" /><path d="M6.500 9.500h5v5h-5z" fill="#e8502c" /><path d="M12.500 9.500h5v5h-5z" fill="#7fba2a" /><path d="M6.500 15.500h5v5h-5z" fill="#1f9de0" /><path d="M12.500 15.500h5v5h-5z" fill="#f4b41a" /></svg>
      </Task>
      <Task label="Correo">
        <svg width="24" height="20" viewBox="0 0 24 20"><path d="M0 7l12-6 12 6v12H0z" fill="#fff" /><path d="M2 7.500h20L13 11l-1.500 4-2-4z" fill="#0a0f16" /></svg>
      </Task>
      <Task label="Sigma" className="w-[47px]">
        <svg width="24" height="24" viewBox="0 0 24 24"><circle cx="12" cy="12" r="11.500" fill="#5f93c0" /><circle cx="10" cy="7" r="6" fill="#86b0d4" fillOpacity=".6" /><path d="M12 8.500V6.500H4.500l4 5.500-4 5.500H12v-2" fill="none" stroke="#fff" strokeWidth="1.600" /><path d="M18.500 5v5M18.500 7.500a2 2 0 1 1-.1-.5M15 16.500h4M17 14.500v4" fill="none" stroke="#fff" /></svg>
      </Task>
      <Task label="Chrome" open>
        <svg width="22" height="22" viewBox="0 0 22 22"><circle cx="11" cy="11" r="11" fill="#fbc116" /><path d="M1.500 5.500A11 11 0 0 1 20.500 5.500L21 7H11a4.500 4.500 0 0 0-4 6z" fill="#e0402f" /><path d="M1.500 5.500A11 11 0 0 0 10 22l4.500-8A4.500 4.500 0 0 1 7 13z" fill="#2e9e4f" /><circle cx="11" cy="11" r="5" fill="#fff" /><circle cx="11" cy="11" r="3.900" fill="#4285f4" /></svg>
      </Task>
      <Task label="Paint" className="w-[47px]" open>
        <svg width="24" height="24" viewBox="0 0 24 24"><path d="M1 15C1 7 9 3 16 5c6 2 7 9 3 14-2 2-4 1-5 3-2 2-5 1-5-2 0-4-2-4-4-3s-4 0-4-2z" fill="#c9dcec" /><circle cx="6" cy="11" r="1.600" fill="#7a5fb0" /><circle cx="9" cy="8" r="1.500" fill="#3ba35a" /><circle cx="13.500" cy="8" r="1.500" fill="#e3b11f" /><circle cx="10" cy="14" r="1.800" fill="#2a5caa" /><path d="M21 1l2 2-9 17-2 1 1-4z" fill="#e2a35e" /><path d="M18 1h5v4h-4z" fill="#b98850" /></svg>
      </Task>
      <Task label="Excel" active>
        <svg width="22" height="20" viewBox="0 0 22 20"><path d="M12 2h9v16h-9z" fill="#e9f3ec" stroke="#1f7246" /><path d="M13 5h7M13 8h7M13 11h7M13 14h7M16.500 3v14" stroke="#1f7246" /><path d="M0 1l13-1v20L0 19z" fill="#1f7246" /><path d="M3.500 6l5.500 8M9 6l-5.500 8" stroke="#fff" strokeWidth="1.800" /></svg>
      </Task>
      <Task label="Grabador" open>
        <svg width="22" height="20" viewBox="0 0 22 20" fill="none" stroke="#ccc"><rect x=".5" y=".5" width="21" height="19" rx="2" strokeDasharray="2 1.500" /></svg>
      </Task>

      <div className="ml-auto flex items-center">
        <button aria-label="Contactos" className="mr-3 flex w-6 justify-center">
          <svg width="15" height="15" viewBox="0 0 15 15" fill="none" stroke="#fff" strokeWidth="1.200"><circle cx="5" cy="7" r="2.300" /><path d="M1 14c0-6 8-6 8 0" /><circle cx="10.500" cy="3" r="2.300" /><path d="M9 6.500c3-1.500 5 .5 5 3" /></svg>
        </button>
        <button aria-label="Mostrar iconos ocultos" className="flex w-[22px] justify-center">
          <svg width="12" height="7" viewBox="0 0 12 7" fill="none" stroke="#fff" strokeWidth="1.400"><path d="M1 6l5-5 5 5" /></svg>
        </button>
        <span className="flex w-6 justify-center">
          <svg width="16" height="11" viewBox="0 0 16 11" fill="none" stroke="#fff"><path d="M5.500 2.500h8.500v7.500H4V6.500M14 5h1.500v3H14" /><path d="M6 4.500h7v4H6zM1 1h3.500v3H1z" fill="#fff" /><path d="M2.500 4v4" /></svg>
        </span>
        <span className="flex w-6 justify-center">
          <svg width="16" height="14" viewBox="0 0 16 14" fill="none" stroke="#fff"><path d="M1 5h2.500L7 1.500v11L3.500 9H1zM9 4.500c1.300 1.300 1.300 3.500 0 5M11 3c2.200 2.200 2.200 6 0 8" /><path d="M13 1.500c3 3 3 8 0 11" stroke="#777" /></svg>
        </span>
        <span className="flex w-6 justify-center">
          <svg width="14" height="14" viewBox="0 0 14 14" fill="none" stroke="#ccc" strokeWidth="1.200"><path d="M1 12C2 6 6 2 12 1.500" stroke="#777" /><path d="M3.500 13C4 8.500 7.500 5 12.500 4.500M6.500 13c.5-3 2.500-5 6-5.500" /><path d="M9.500 13c0-1.500 1-3 3-3v3z" fill="#fff" /></svg>
        </span>
        <span className="w-[28px] text-center">ESP</span>
        <time className="w-[76px] text-center leading-[17px] whitespace-nowrap">
          2:24 p. m.
          <br />
          17/08/2019
        </time>
        <button aria-label="Centro de notificaciones" className="w-[14px] overflow-hidden pl-[8px]">
          <svg width="14" height="14" viewBox="0 0 14 14"><path d="M0 1h14v10H9l-2 3-2-3H0z" fill="#fff" /><path d="M3 4h8M3 6.500h8M3 9h8" stroke="#111" /></svg>
        </button>
      </div>
    </div>
  );
}

function Watermark() {
  return (
    <div className="absolute bottom-3 left-[17px] font-['Lato',sans-serif] font-black text-white [text-shadow:1px_1px_2px_#000,0_0_1px_#000]">
      <div className="text-[11px] leading-3">RECORDED WITH</div>
      <div className="flex items-center text-lg leading-8">
        <span className="w-[121px]">SCREENCAST</span>
        <svg width="34" height="34" viewBox="0 0 34 34" fill="none" className="mr-[5px]">
          <circle cx="17" cy="17" r="15.500" fill="#07182c" fillOpacity=".75" stroke="#6fa8d8" strokeWidth="2" />
          <path d="M8 18c0-11 17-12 18-1M9 21c2 7 11 8 16 3" stroke="#1763ab" strokeWidth="4" />
          <circle cx="17" cy="16" r="5.500" fill="#5f9fe0" />
        </svg>
        <span>MATIC</span>
      </div>
    </div>
  );
}

export default function App() {
  return (
    <div className={`relative h-screen overflow-hidden bg-black text-[11px] ${UI}`}>
      <div className="-ml-3 flex h-full flex-col pt-[5px] pb-[6px]">
        <TabStrip />
        <Ribbon />
        <FormulaBar />
        <Sheet />
        <SheetTabs />
        <StatusBar />
        <Taskbar />
      </div>
      <Watermark />
    </div>
  );
}
